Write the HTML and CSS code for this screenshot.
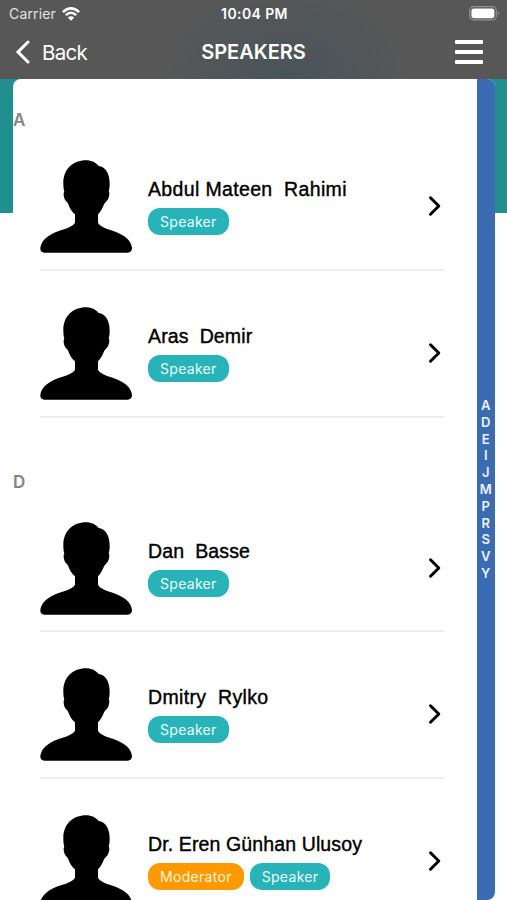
FILE: index.html
```html
<!DOCTYPE html>
<html lang="en">
<head>
<meta charset="utf-8">
<title>Speakers</title>
<link rel="stylesheet" href="styles.css">
</head>
<body>
<svg class="defs" aria-hidden="true">
  <symbol id="person" viewBox="0 0 276 277">
    <path d="M138 0C155 0 168 7 176 17C195 18 209 38 209 70C209 80 208 87 206 93C211 98 206 120 198 124C192 128 190 139 186 145C182 152 178 158 174 162V187C181 199 199 205 218 211C251 222 274 239 276 263Q276 275 264 277H12Q0 275 1 263C3 241 25 222 58 211C78 205 97 199 105 187V162C98 157 91 147 87 137Q85 128 80 124C73 120 68 99 73 94C71 87 70 80 70 68C70 26 99 0 138 0Z"/>
  </symbol>
  <symbol id="chevron" viewBox="0 0 14 22"><path d="M2.5 2.8L10.8 11L2.5 19.2" fill="none" stroke="currentColor" stroke-width="3" stroke-linecap="round" stroke-linejoin="round"/></symbol>
</svg>
<div class="screen">
  <header class="header">
    <div class="status">
      <div class="carrier"><span class="carrier-name">Carrier</span>
        <svg class="wifi" viewBox="0 0 18 14" fill="none" stroke="#fff" stroke-width="2.5"><path d="M.9 5.1Q9-2.3 17.1 5.1M3.8 8.2Q9 3.3 14.2 8.2"/><path d="M9 13.8L5.8 10.5Q9 7.8 12.2 10.5Z" fill="#fff" stroke="none"/></svg>
      </div>
      <span class="time">10:04 PM</span>
      <svg class="battery" viewBox="0 0 31 15"><rect x=".7" y=".7" width="26.6" height="13.2" rx="4" fill="none" stroke="#929292" stroke-width="1.2"/><rect x="2.4" y="2.4" width="23" height="9.8" rx="2.4" fill="#fff"/><path d="M28.8 4.9Q31.2 7.3 28.8 9.7Z" fill="#929292"/></svg>
    </div>
    <nav class="nav">
      <div class="back"><svg class="back-icon" viewBox="0 0 16 24"><path d="M13 2L3 12L13 22" fill="none" stroke="#fff" stroke-width="3" stroke-linecap="round"/></svg><span class="back-label">Back</span></div>
      <h1 class="title">SPEAKERS</h1>
      <div class="menu"><i></i><i></i><i></i></div>
    </nav>
  </header>
  <main class="content">
    <div class="panel">
      <div class="list">
        <h2 class="section first">A</h2>
        <article class="row"><svg class="avatar"><use href="#person"/></svg><div class="info"><div class="name wide">Abdul Mateen  Rahimi</div><div class="tags"><span class="tag">Speaker</span></div></div><svg class="chevron"><use href="#chevron"/></svg></article>
        <article class="row"><svg class="avatar"><use href="#person"/></svg><div class="info"><div class="name">Aras  Demir</div><div class="tags"><span class="tag">Speaker</span></div></div><svg class="chevron"><use href="#chevron"/></svg></article>
        <h2 class="section">D</h2>
        <article class="row"><svg class="avatar"><use href="#person"/></svg><div class="info"><div class="name">Dan  Basse</div><div class="tags"><span class="tag">Speaker</span></div></div><svg class="chevron"><use href="#chevron"/></svg></article>
        <article class="row"><svg class="avatar"><use href="#person"/></svg><div class="info"><div class="name wide">Dmitry  Rylko</div><div class="tags"><span class="tag">Speaker</span></div></div><svg class="chevron"><use href="#chevron"/></svg></article>
        <article class="row"><svg class="avatar"><use href="#person"/></svg><div class="info"><div class="name">Dr. Eren Günhan Ulusoy</div><div class="tags"><span class="tag moderator">Moderator</span><span class="tag">Speaker</span></div></div><svg class="chevron"><use href="#chevron"/></svg></article>
      </div>
      <div class="index"><span>A</span><span>D</span><span>E</span><span>I</span><span>J</span><span>M</span><span>P</span><span>R</span><span>S</span><span>V</span><span>Y</span></div>
    </div>
  </main>
</div>
</body>
</html>
```
FILE: styles.css
```css
* { box-sizing: border-box; }
body { margin: 0; background: #fff; font-family: Inter, "Liberation Sans", sans-serif; }
.defs { position: absolute; width: 0; height: 0; }
.screen { width: 507px; height: 900px; overflow: hidden; display: flex; flex-direction: column; }
.header { height: 79px; flex: none; color: #fff; background: radial-gradient(ellipse 125px 95px at 285px 79px, #48545a, #505659 50%, #575757 100%); }
.status { height: 27px; display: grid; grid-template-columns: 1fr auto 1fr; align-items: center; padding: 0 7px 0 9px; }
.carrier { display: flex; align-items: center; gap: 6px; font-size: 14px; color: #e2e2e2; }
.carrier-name { letter-spacing: .15px; }
.wifi { width: 18px; height: 14px; }
.time { font-size: 14px; font-weight: 600; letter-spacing: .4px; }
.battery { width: 31px; height: 15px; justify-self: end; }
.nav { height: 50px; display: grid; grid-template-columns: 1fr auto 1fr; align-items: center; padding: 0 24px 0 15px; }
.back { display: flex; align-items: center; gap: 11px; }
.back-icon { width: 16px; height: 24px; }
.back-label { font-size: 20.5px; letter-spacing: -.7px; }
.title { margin: 0 0 0 9px; font-size: 20px; font-weight: 600; letter-spacing: -.05px; }
.menu { display: flex; flex-direction: column; gap: 6px; justify-self: end; width: 28px; }
.menu i { height: 4px; background: #fff; border-radius: 1px; }
.content { flex: 1; padding: 0 12px 0 13px; background: linear-gradient(#218f8f, #218f8f) 0 0 / 100% 134px no-repeat; }
.panel { height: 821px; display: flex; overflow: hidden; background: #fff; border-radius: 8px; }
.list { flex: 1; }
.section { height: 68px; margin: 0; padding-top: 55px; font-size: 17px; line-height: 18px; font-weight: 600; color: #858585; }
.first { height: 45px; padding-top: 32px; }
.row { height: 146.8px; margin: 0 32px 0 27px; padding-top: 36px; border-bottom: 2px solid #eee; display: flex; }
.avatar { width: 92px; height: 93px; flex: none; }
.info { margin-left: 16px; padding-top: 17px; flex: 1; }
.name { height: 31px; font: 19.5px/25px "Liberation Sans", sans-serif; white-space: pre; -webkit-text-stroke: .4px #000; letter-spacing: .12px; }
.wide { letter-spacing: .35px; }
.tags { display: flex; gap: 6px; }
.tag { height: 27px; padding: 0 12px; border-radius: 12px; background: #27b3b7; color: #e9fbfb; font-size: 14px; line-height: 27px; letter-spacing: .3px; }
.moderator { background: #ff9900; color: #fff5dc; }
.chevron { width: 14px; height: 22px; margin: 35px 3px 0 0; }
.index { width: 18.5px; background: #3b6bb0; color: #edf3ff; display: flex; flex-direction: column; align-items: center; padding-top: 318px; font-size: 13px; font-weight: 600; line-height: 16.8px; }
```
